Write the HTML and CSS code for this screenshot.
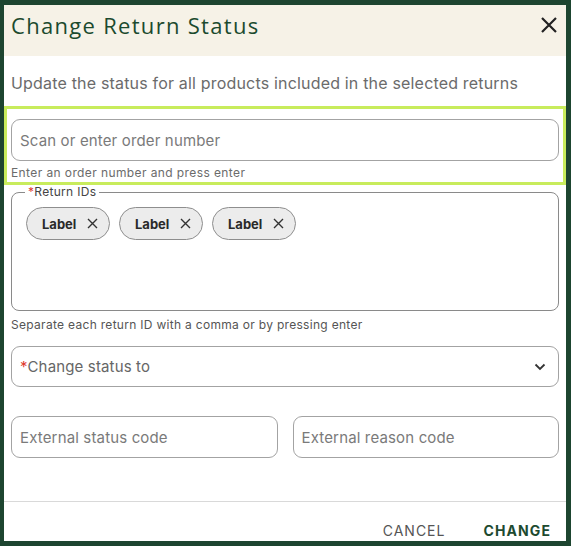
FILE: index.html
```html
<!DOCTYPE html>
<html>
<head>
<meta charset="utf-8">
<link rel="stylesheet" href="styles.css">
</head>
<body>
<div class="dialog">
  <div class="header">
    <h1 class="title">Change Return Status</h1>
    <svg class="close" width="18" height="18" viewBox="0 0 18 18"><path d="M2 2L16 16M16 2L2 16" stroke="#222" stroke-width="2.2" fill="none"/></svg>
  </div>
  <div class="content">
    <p class="subtitle">Update the status for all products included in the selected returns</p>
    <div class="scan-box">
      <div class="field"><span class="ph">Scan or enter order number</span></div>
      <div class="helper">Enter an order number and press enter</div>
    </div>
    <fieldset class="ids">
      <legend><span class="req">*</span>Return IDs</legend>
      <div class="chips">
        <span class="chip">Label<svg width="11" height="11" viewBox="0 0 11 11"><path d="M1 1L10 10M10 1L1 10" stroke="#333" stroke-width="1.4" fill="none"/></svg></span>
        <span class="chip">Label<svg width="11" height="11" viewBox="0 0 11 11"><path d="M1 1L10 10M10 1L1 10" stroke="#333" stroke-width="1.4" fill="none"/></svg></span>
        <span class="chip">Label<svg width="11" height="11" viewBox="0 0 11 11"><path d="M1 1L10 10M10 1L1 10" stroke="#333" stroke-width="1.4" fill="none"/></svg></span>
      </div>
    </fieldset>
    <div class="helper helper2">Separate each return ID with a comma or by pressing enter</div>
    <div class="field select"><span class="ph"><span class="req">*</span>Change status to</span>
      <svg width="12" height="8" viewBox="0 0 12 8"><path d="M1.5 1.5L6 6L10.5 1.5" stroke="#333" stroke-width="1.8" fill="none"/></svg>
    </div>
    <div class="row">
      <div class="field"><span class="ph">External status code</span></div>
      <div class="field"><span class="ph">External reason code</span></div>
    </div>
  </div>
  <div class="footer">
    <button class="btn cancel">CANCEL</button>
    <button class="btn change">CHANGE</button>
  </div>
</div>
</body>
</html>
```
FILE: styles.css
```css
* { box-sizing: border-box; }
html, body { margin: 0; padding: 0; }
body {
  background: #1d4530;
  font-family: Inter, "Liberation Sans", sans-serif;
  height: 546px;
  overflow: hidden;
}
.dialog {
  margin: 5px 5px 5px 4px;
  height: 536px;
  background: #fff;
  display: flex;
  flex-direction: column;
}
.header {
  height: 51px;
  background: #f6f2e7;
  display: flex;
  align-items: center;
  justify-content: space-between;
  padding: 0 8px 12px 7px;
  flex: none;
}
.title {
  margin: 0;
  font-family: "Open Sans", sans-serif;
  font-weight: 500;
  font-size: 22px;
  line-height: 28px;
  letter-spacing: 1.3px;
  color: #1b4a2e;
}
.content {
  flex: 1;
  padding: 0 7px;
}
.subtitle {
  margin: 17px 0 0;
  font-size: 16px;
  line-height: 20px;
  letter-spacing: 0.18px;
  color: #6b6b6b;
}
.scan-box {
  margin: 13px -7px 0;
  border: 3px solid #c8ec5c;
  padding: 10px 4px 1px;
}
.field {
  height: 42px;
  border: 1px solid #a3a3a3;
  border-radius: 9px;
  display: flex;
  align-items: center;
  padding: 0 8px;
}
.ph {
  font-size: 15px;
  letter-spacing: 0.15px;
  color: #7a7a7a;
}
.helper {
  margin-top: 4px;
  font-size: 12px;
  line-height: 16px;
  letter-spacing: 0.4px;
  color: #6b6b6b;
}
.ids {
  margin: -1px 0 0;
  border: 1px solid #8a8a8a;
  border-radius: 8px;
  padding: 0 14px;
  min-width: 0;
}
.ids legend {
  font-size: 12px;
  line-height: 16px;
  letter-spacing: 0.3px;
  color: #444;
  padding: 0 3px;
  margin-left: -1px;
}
.req { color: #e03a2e; }
.chips {
  display: flex;
  gap: 9px;
  padding-top: 7px;
  min-height: 110px;
  align-items: flex-start;
}
.chip {
  height: 33px;
  width: 84px;
  border: 1px solid #8e8e8e;
  background: #ececec;
  border-radius: 17px;
  display: flex;
  align-items: center;
  gap: 11px;
  padding-left: 15px;
  font-size: 13px;
  font-weight: 700;
  color: #2a2a2a;
}
.helper2 { margin-top: 6px; color: #555; letter-spacing: 0.3px; }
.select {
  margin-top: 13px;
  justify-content: space-between;
  height: 41px;
  padding-right: 12px;
}
.select .ph { color: #666; }
.row {
  margin-top: 29px;
  display: grid;
  grid-template-columns: 1fr 1fr;
  gap: 15px;
}
.footer {
  flex: none;
  height: 40px;
  border-top: 1px solid #d9d9d9;
  display: flex;
  justify-content: flex-end;
  align-items: flex-end;
  gap: 38px;
  padding: 0 15px 2px 0;
}
.btn {
  background: none;
  border: none;
  padding: 0;
  font-family: Inter, "Liberation Sans", sans-serif;
  font-size: 14px;
  letter-spacing: 1.1px;
  line-height: 16px;
}
.cancel { color: #555; font-weight: 400; letter-spacing: 1px; }
.change { color: #1d4a30; font-weight: 700; }
```
